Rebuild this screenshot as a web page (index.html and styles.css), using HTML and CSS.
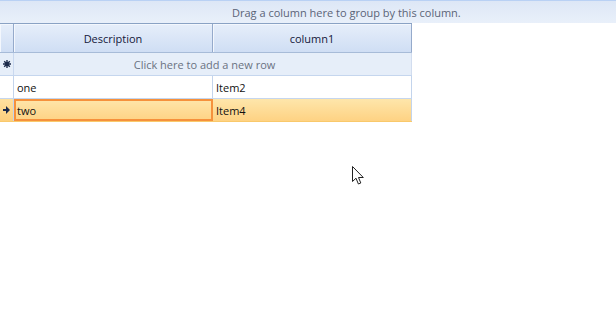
FILE: index.html
```html
<!DOCTYPE html>
<html>
<head>
<meta charset="utf-8">
<link rel="stylesheet" href="styles.css">
</head>
<body>
<div class="group-panel"><span class="group-text">Drag a column here to group by this column.</span></div>
<div class="grid">
  <div class="row header">
    <div class="cell ind"></div>
    <div class="cell col">Description</div>
    <div class="cell col">column1</div>
  </div>
  <div class="row newrow">
    <div class="cell ind"><svg width="8" height="8" viewBox="0 0 8 8"><path d="M4 0v8M0 4h8M1.2 1.2l5.6 5.6M6.8 1.2l-5.6 5.6" stroke="#1b2a4a" stroke-width="1.4"/></svg></div>
    <div class="cell span">Click here to add a new row</div>
  </div>
  <div class="row data">
    <div class="cell ind"></div>
    <div class="cell col">one</div>
    <div class="cell col">Item2</div>
  </div>
  <div class="row data selected">
    <div class="cell ind"><svg width="7" height="8" viewBox="0 0 7 8"><path d="M0 3h3V0l4 4-4 4V5H0z" fill="#1b2a4a"/></svg></div>
    <div class="cell col current">two</div>
    <div class="cell col">Item4</div>
  </div>
</div>
<svg class="cursor" width="14" height="20" viewBox="0 0 14 20"><path d="M0.5 0.5 L0.5 15.5 L4 12.2 L6.4 18 L8.8 17 L6.5 11.5 L11.3 11.5 Z" fill="#fff" stroke="#222" stroke-width="1" stroke-linejoin="miter"/></svg>
</body>
</html>
```
FILE: styles.css
```css
html, body {
  margin: 0;
  padding: 0;
  background: #fff;
  width: 616px;
  height: 309px;
  overflow: hidden;
  font-family: "Open Sans", "Noto Sans", sans-serif;
  font-size: 11px;
  color: #111;
  position: relative;
}
.group-panel {
  height: 22px;
  border-top: 1px solid #b9d1f4;
  background: linear-gradient(#dde7f6, #e9f0fa);
  display: flex;
  align-items: center;
  color: #5b6477;
}
.group-text {
  margin-left: 232px;
}
.grid {
  width: 412px;
}
.row {
  display: flex;
  box-sizing: border-box;
}
.cell {
  box-sizing: border-box;
  display: flex;
  align-items: center;
}
.ind {
  width: 14px;
  justify-content: center;
  border-right: 1px solid #c3d4ec;
}
.col {
  width: 199px;
  border-right: 1px solid #c3d4ec;
}
.header {
  height: 30px;
  border-top: 1px solid #8aa2c4;
  border-bottom: 1px solid #a7bbd8;
}
.header .cell {
  background: linear-gradient(#e6eefa, #cfdef4);
  border-right: 1px solid #95aacb;
  box-shadow: inset 1px 1px 0 #f3f7fd;
}
.header .col {
  justify-content: center;
  color: #15183a;
}
.newrow {
  height: 23px;
  background: #e6eef9;
  border-bottom: 1px solid #c5d6ee;
}
.newrow .ind {
  border-right: 1px solid #c9d8ef;
}
.span {
  flex: 1;
  justify-content: center;
  padding-right: 16px;
  color: #6a7282;
  border-right: 1px solid #d2ddef;
}
.data {
  height: 23px;
  border-bottom: 1px solid #c5d6ee;
}
.data .col {
  padding-left: 3px;
}
.selected {
  background: linear-gradient(#fee6ab, #fed283);
  border-bottom: 1px solid #f9c96b;
}
.selected .ind {
  background: linear-gradient(#fee1a0, #fdcf7c);
}
.current {
  border: 2px solid #f5913c;
  padding-left: 1px !important;
}
.cursor {
  position: absolute;
  left: 352px;
  top: 166px;
}
```
